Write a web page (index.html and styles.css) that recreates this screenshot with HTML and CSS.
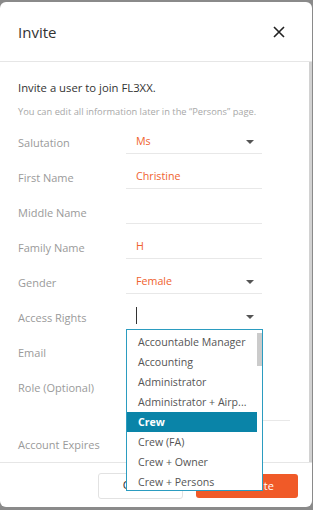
FILE: index.html
```html
<!DOCTYPE html>
<html>
<head>
<meta charset="utf-8">
<link rel="stylesheet" href="styles.css">
</head>
<body>
<div class="modal">
  <div class="modal-header">
    <h1 class="title">Invite</h1>
    <svg class="close" width="12" height="12" viewBox="0 0 12 12"><path d="M1 1L11 11M11 1L1 11" stroke="#222" stroke-width="1.6" fill="none"/></svg>
  </div>
  <div class="modal-body">
    <div class="content">
      <p class="intro">Invite a user to join FL3XX.</p>
      <p class="hint">You can edit all information later in the “Persons” page.</p>
      <div class="form">
        <div class="row"><span class="label">Salutation</span><div class="field select"><span class="value">Ms</span><span class="caret"></span></div></div>
        <div class="row"><span class="label">First Name</span><div class="field"><span class="value">Christine</span></div></div>
        <div class="row"><span class="label">Middle Name</span><div class="field"><span class="value"></span></div></div>
        <div class="row"><span class="label">Family Name</span><div class="field"><span class="value">H</span></div></div>
        <div class="row"><span class="label">Gender</span><div class="field select"><span class="value">Female</span><span class="caret"></span></div></div>
        <div class="row"><span class="label">Access Rights</span><div class="field select open"><span class="cursor"></span><span class="caret"></span></div></div>
        <div class="row"><span class="label">Email</span><div class="field"><span class="value"></span></div></div>
        <div class="row"><span class="label">Role (Optional)</span><div class="field tall"><span class="value"></span></div></div>
        <div class="row"><span class="label">Account Expires</span><div class="field"><span class="value"></span></div></div>
      </div>
    </div>
    <div class="scrollbar"></div>
  </div>
  <div class="modal-footer">
    <button class="btn btn-cancel">Cancel</button>
    <button class="btn btn-primary">Send Invite</button>
  </div>
  <div class="dropdown">
    <ul class="options">
      <li>Accountable Manager</li>
      <li>Accounting</li>
      <li>Administrator</li>
      <li>Administrator + Airp...</li>
      <li class="active">Crew</li>
      <li>Crew (FA)</li>
      <li>Crew + Owner</li>
      <li>Crew + Persons</li>
    </ul>
    <div class="dd-scroll"><div class="dd-thumb"></div></div>
  </div>
</div>
</body>
</html>
```
FILE: styles.css
```css
html, body {
  margin: 0;
  padding: 0;
}
body {
  width: 313px;
  height: 510px;
  background: #8a8a8a;
  font-family: "Open Sans", "Noto Sans", sans-serif;
  overflow: hidden;
  padding-top: 2px;
  box-sizing: border-box;
}
.modal {
  position: relative;
  width: 312px;
  height: 505px;
  background: #fff;
  border-radius: 6px;
  display: flex;
  flex-direction: column;
  overflow: hidden;
}
.modal-header {
  height: 59px;
  border-bottom: 1px solid #e6e6e6;
  display: flex;
  align-items: center;
  justify-content: space-between;
  padding: 0 27px 0 18px;
  flex: none;
  box-sizing: content-box;
}
.title {
  margin: 0;
  font-size: 15px;
  font-weight: 400;
  color: #333;
  line-height: 20px;
}
.close {
  display: block;
}
.modal-body {
  flex: 1;
  display: flex;
  overflow: hidden;
  min-height: 0;
}
.content {
  flex: 1;
  padding: 18px 0 0 18px;
  min-width: 0;
}
.scrollbar {
  width: 3px;
  background: #d2d2d2;
  flex: none;
}
.intro {
  margin: 0;
  font-size: 11.3px;
  line-height: 16px;
  color: #333;
}
.hint {
  margin: 9px 0 0;
  font-size: 9.3px;
  line-height: 14px;
  color: #a8a8a8;
}
.form {
  margin-top: 7px;
  display: flex;
  flex-direction: column;
  gap: 7px;
}
.row {
  display: grid;
  grid-template-columns: 108px auto;
  align-items: start;
}
.label {
  font-size: 11px;
  line-height: 16px;
  padding-top: 9px;
  color: #9a9a9a;
}
.field {
  width: 136px;
  border-bottom: 1px solid #e8e8e8;
  display: flex;
  align-items: flex-start;
  justify-content: space-between;
  padding: 7px 8px 0 10px;
  box-sizing: border-box;
  height: 28px;
}
.field.tall {
  height: 50px;
  width: 164px;
}
.value {
  font-size: 10.7px;
  line-height: 16px;
  color: #f0622f;
}
.caret {
  width: 0;
  height: 0;
  border-left: 4px solid transparent;
  border-right: 4px solid transparent;
  border-top: 4px solid #555;
  margin-top: 7px;
}
.cursor {
  width: 1px;
  height: 17px;
  background: #333;
  margin-top: -1px;
}
.field.open {
  border-bottom-color: transparent;
}
.dropdown {
  position: absolute;
  left: 126px;
  top: 327px;
  width: 137px;
  height: 162px;
  border: 1px solid #2b9cc0;
  box-sizing: border-box;
  background: #fff;
  display: flex;
  z-index: 5;
  overflow: hidden;
}
.options {
  list-style: none;
  margin: 0;
  padding: 2px 0 0;
  flex: 1;
}
.options li {
  height: 20px;
  line-height: 20px;
  padding-left: 11px;
  font-size: 10.6px;
  color: #555;
  white-space: nowrap;
}
.options li.active {
  background: #0a84a8;
  color: #fff;
  font-weight: 700;
}
.dd-scroll {
  width: 5px;
  flex: none;
  padding-top: 3px;
}
.dd-thumb {
  height: 33px;
  background: #cbcbcb;
}
.modal-footer {
  flex: none;
  border-top: 1px solid #e6e6e6;
  display: flex;
  justify-content: flex-end;
  align-items: flex-start;
  gap: 13px;
  padding: 10px 14px 0 0;
  box-sizing: border-box;
  height: 45px;
}
.btn {
  font-family: "Open Sans", "Noto Sans", sans-serif;
  font-size: 11.5px;
  line-height: 14px;
  height: 26px;
  border-radius: 3px;
  padding: 0 0 2px;
  cursor: pointer;
}
.btn-cancel {
  width: 85px;
  background: #fff;
  border: 1px solid #e2e2e2;
  color: #333;
}
.btn-primary {
  width: 102px;
  margin-top: 1px;
  height: 24px;
  padding: 0 3px 0 0;
  font-size: 11px;
  background: #f05a28;
  border: none;
  color: #fff;
}
```
